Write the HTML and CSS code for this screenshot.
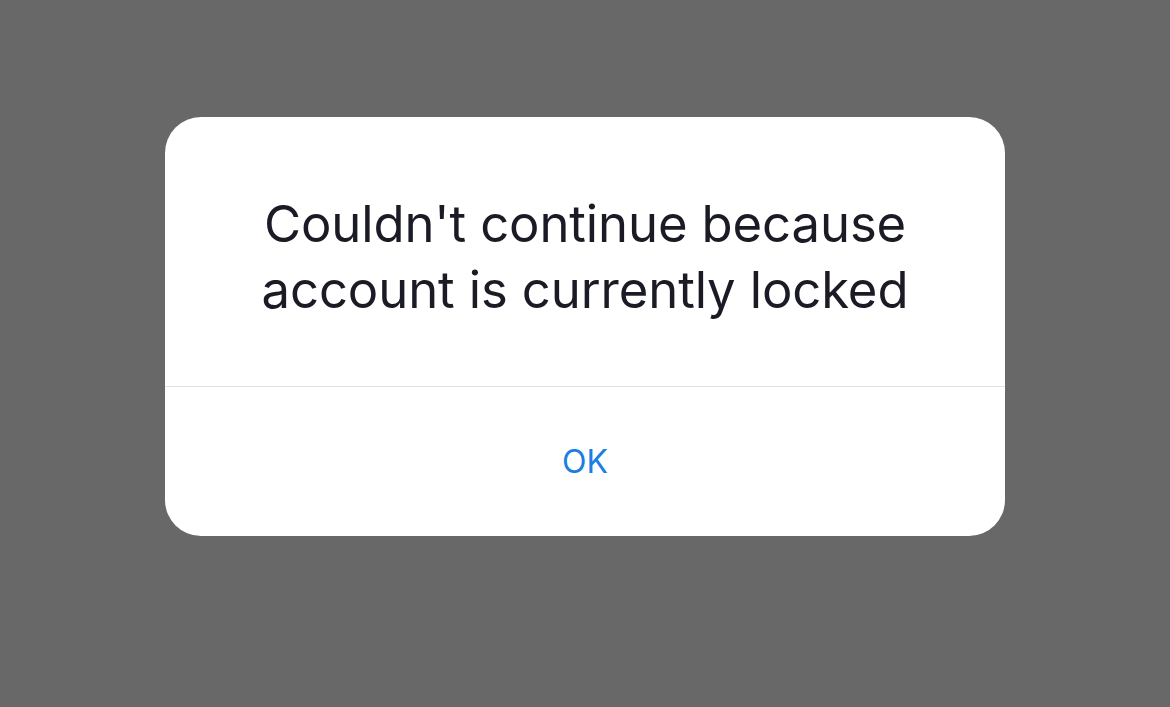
FILE: index.html
```html
<!DOCTYPE html>
<html lang="en">
<head>
    <meta charset="UTF-8">
    <meta name="viewport" content="width=device-width, initial-scale=1.0">
    <title>Account locked</title>
    <link rel="stylesheet" href="styles.css">
</head>
<body>

    <!-- Alerta -->
    <div class="alert">
        <div class="alert-body">
            <p class="alert-title">Couldn't continue because<br>account is currently locked</p>
        </div>
        <button class="alert-button" onclick="this.closest('.alert').style.display='none'">OK</button>
    </div>

</body>
</html>
```

FILE: styles.css
```css
body {
    margin: 0;
    height: 100vh;
    background-color: #686868;
    font-family: Inter, "Noto Sans", Arial, sans-serif;
    display: flex;
    flex-direction: column;
    align-items: center;
    padding-top: 117px;
    box-sizing: border-box;
}
.alert {
    width: 840px;
    background-color: white;
    border-radius: 36px;
    display: flex;
    flex-direction: column;
    overflow: hidden;
}
.alert-body {
    padding: 74px 40px 63px;
    border-bottom: 1px solid #e2e2e4;
}
.alert-title {
    margin: 0;
    text-align: center;
    font-size: 50.8px;
    line-height: 66px;
    font-weight: 400;
    color: #1b1b26;
}
.alert-title {
    letter-spacing: -0.1px;
}
.alert-button {
    height: 149px;
    padding-bottom: 2px;
    border: none;
    background: none;
    font-family: inherit;
    font-size: 32px;
    color: #1a7ee2;
    cursor: pointer;
}
```
